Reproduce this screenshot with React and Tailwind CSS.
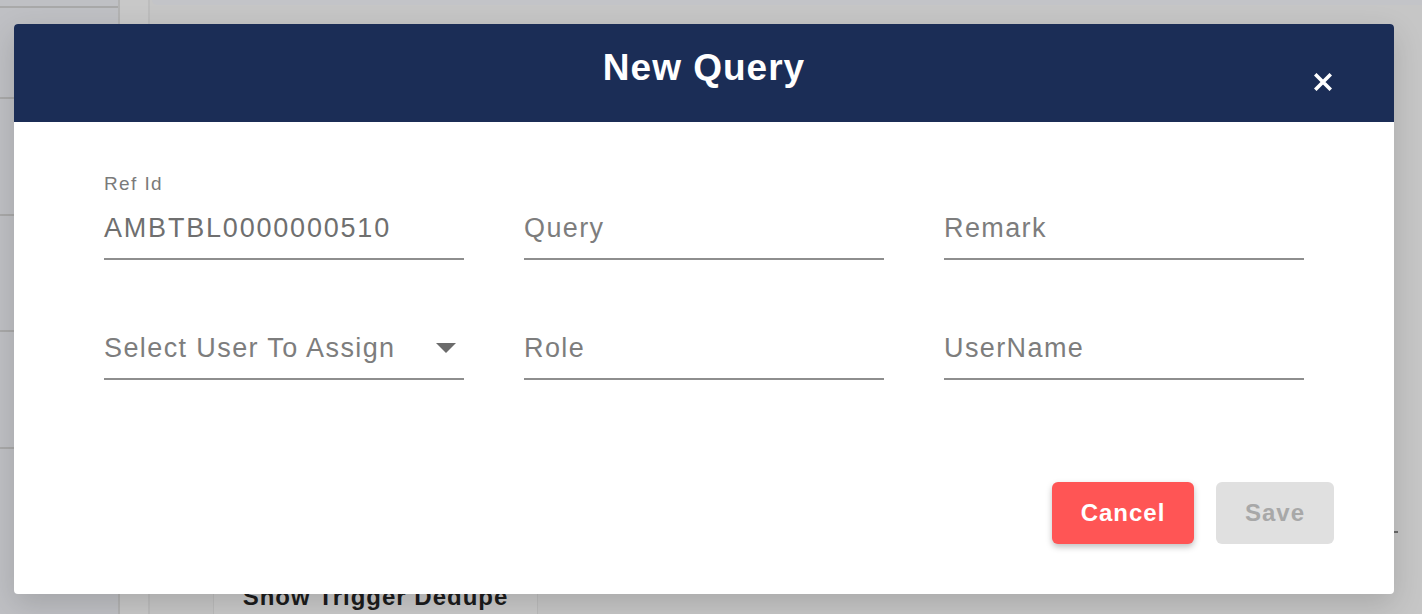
import React from "react";

function Field({ label, value, placeholder, select }) {
  return (
    <div className="flex flex-col">
      <div className="h-[26px] text-[19px] leading-[26px] tracking-[1.4px] text-[#7a7a7a]">{label || ""}</div>
      <div className="flex items-center h-[63px] border-b-2 border-[#8e8e8e]">
        <span
          className={
            "flex-1 text-[27px] leading-[30px] " +
            (value ? "text-[#6f6f6f] tracking-[1.8px]" : "text-[#7d7d7d] tracking-[1.4px]")
          }
        >
          {value || placeholder}
        </span>
        {select && (
          <svg width="20" height="10" viewBox="0 0 20 10" className="mr-[8px]">
            <path d="M0 0 L20 0 L10 10 Z" fill="#6b6b6b" />
          </svg>
        )}
      </div>
    </div>
  );
}

export default function App() {
  return (
    <div
      className="relative w-[1422px] h-[614px] overflow-hidden bg-[#c6c6c6]"
      style={{ fontFamily: '"Liberation Sans", Arial, sans-serif' }}
    >
      {/* background page (dimmed) */}
      <div className="flex h-full">
        <div className="w-[120px] h-full bg-[#bfc0c4] border-r-2 border-[#b3b3b3] flex flex-col">
          <div className="h-[8px] border-b-2 border-[#a9a9a9]" />
          <div className="h-[91px] border-b-2 border-[#a9a9a9]" />
          <div className="h-[117px] border-b-2 border-[#a9a9a9]" />
          <div className="h-[116px] border-b-2 border-[#a9a9a9]" />
          <div className="h-[117px] border-b-2 border-[#a9a9a9]" />
        </div>
        <div className="w-[30px] h-full bg-[#c8c8c8] border-r-2 border-[#bdbdbd]" />
        <div className="flex-1 flex flex-col">
          <div className="h-[5px] bg-[#c3c4c8] rounded-bl-[6px] ml-[2px]" />
          <div className="flex-1 flex flex-col justify-end">
            <div className="flex pl-[63px]">
              <div className="w-[325px] h-[30px] bg-[#c9c9c9] border-x border-[#bcbcbc] flex justify-center items-end">
                <span className="text-[24px] font-bold tracking-[1px] text-[#1c1c1c] leading-[28px] -translate-y-[3px]">
                  Show Trigger Dedupe
                </span>
              </div>
            </div>
          </div>
        </div>
      </div>
      <div className="absolute left-[1394px] top-[531px] w-[4px] h-[2px] bg-[#6a6a6a]" />

      {/* dialog */}
      <div className="absolute left-[14px] top-[24px] w-[1380px] h-[570px] bg-white rounded-[4px] overflow-hidden shadow-[0_10px_30px_rgba(0,0,0,0.15)]">
        <div className="relative h-[98px] bg-[#1b2d56] flex items-center justify-center">
          <h2 className="text-[37px] font-bold tracking-[1px] text-white leading-none -mt-[12px]">New Query</h2>
          <svg
            className="absolute left-[1300px] top-[49px]"
            width="18"
            height="18"
            viewBox="0 0 18 18"
          >
            <path d="M2.5 2.5 L15.5 15.5 M15.5 2.5 L2.5 15.5" stroke="white" strokeWidth="3.6" strokeLinecap="square" />
          </svg>
        </div>
        <div className="px-[90px] pt-[49px]">
          <div className="grid grid-cols-3 gap-x-[60px] gap-y-[31px] w-[1200px]">
            <Field label="Ref Id" value="AMBTBL0000000510" />
            <Field placeholder="Query" />
            <Field placeholder="Remark" />
            <Field placeholder="Select User To Assign" select />
            <Field placeholder="Role" />
            <Field placeholder="UserName" />
          </div>
          <div className="flex justify-end gap-[22px] mt-[102px] w-[1230px]">
            <button className="w-[142px] h-[62px] rounded-[6px] bg-[#ff5555] text-white text-[24px] font-bold tracking-[1px] shadow-[0_3px_6px_rgba(0,0,0,0.25)]">
              Cancel
            </button>
            <button className="w-[118px] h-[62px] rounded-[6px] bg-[#e0e0e0] text-[#a8a8a8] text-[24px] font-bold tracking-[1px]">
              Save
            </button>
          </div>
        </div>
      </div>
    </div>
  );
}
